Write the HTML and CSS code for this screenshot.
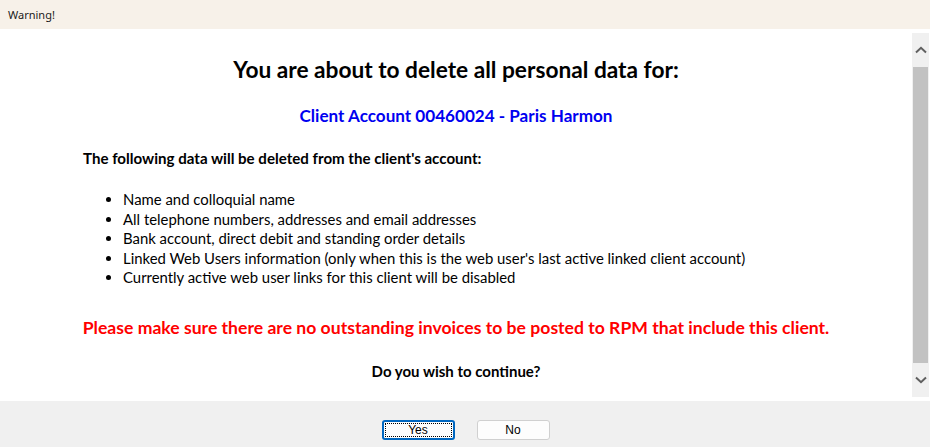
FILE: index.html
```html
<!DOCTYPE html>
<html lang="en">

<head>
  <meta charset="UTF-8">
  <meta name="viewport" content="width=device-width, initial-scale=1.0">
  <title>Warning!</title>
  <link rel="stylesheet" href="styles.css">
</head>

<body>
  <div class="titlebar">Warning!</div>
  <div class="main">
    <div class="content">
      <h1>You are about to delete all personal data for:</h1>
      <h2 class="client">Client Account 00460024 - Paris Harmon</h2>
      <p class="lead">The following data will be deleted from the client's account:</p>
      <ul>
        <li>Name and colloquial name</li>
        <li>All telephone numbers, addresses and email addresses</li>
        <li>Bank account, direct debit and standing order details</li>
        <li>Linked Web Users information (only when this is the web user's last active linked client account)</li>
        <li>Currently active web user links for this client will be disabled</li>
      </ul>
      <p class="alert">Please make sure there are no outstanding invoices to be posted to RPM that include this client.</p>
      <p class="ask">Do you wish to continue?</p>
    </div>
    <div class="scrollbar">
      <div class="arrow">
        <svg width="12" height="8" viewBox="0 0 12 8"><path d="M1 6.5 L6 1.8 L11 6.5" fill="none" stroke="#5f5f5f" stroke-width="2"/></svg>
      </div>
      <div class="thumb"></div>
      <div class="arrow">
        <svg width="12" height="8" viewBox="0 0 12 8"><path d="M1 1.5 L6 6.2 L11 1.5" fill="none" stroke="#5f5f5f" stroke-width="2"/></svg>
      </div>
    </div>
  </div>
  <div class="footer">
    <button class="btn btn_focus"><span>Yes</span></button>
    <button class="btn">No</button>
  </div>
</body>

</html>
```

FILE: styles.css
```css
* {
  box-sizing: border-box;
}

body {
  margin: 0;
  width: 930px;
  height: 447px;
  display: flex;
  flex-direction: column;
  background-color: #f0f0f0;
  font-family: Lato, "Open Sans", sans-serif;
  color: #000;
  overflow: hidden;
}

.titlebar {
  height: 29px;
  padding-left: 8px;
  display: flex;
  align-items: center;
  background-color: #f7f1e9;
  font-family: "Noto Sans", sans-serif;
  font-size: 11px;
  color: #1a1a1a;
}

.main {
  height: 372px;
  display: flex;
  background-color: #fff;
}

.content {
  flex: 1;
  padding-top: 27px;
}

h1 {
  margin: 0;
  text-align: center;
  font-size: 22.7px;
  font-weight: bold;
  line-height: 28px;
}

.client {
  margin: 21px 0 0;
  text-align: center;
  font-size: 17.1px;
  line-height: 22px;
  color: #0000f0;
}

.lead {
  margin: 21px 0 0 83px;
  font-size: 15.1px;
  font-weight: bold;
  line-height: 20px;
}

ul {
  margin: 22px 0 0;
  padding-left: 123px;
  font-size: 14.9px;
  line-height: 19.5px;
}

.alert {
  margin: 28.5px 0 0;
  text-align: center;
  font-size: 17.6px;
  font-weight: bold;
  color: #ff0000;
  line-height: 24px;
}

.ask {
  margin: 21px 0 0;
  text-align: center;
  font-size: 15px;
  font-weight: bold;
  line-height: 20px;
}

.scrollbar {
  width: 17px;
  margin: 4px 1px 4px 0;
  display: flex;
  flex-direction: column;
  background-color: #f0f0f0;
}

.arrow {
  height: 34px;
  display: flex;
  align-items: center;
  justify-content: center;
}

.thumb {
  flex: 1;
  margin: 0 1px;
  background-color: #c2c2c2;
}

.footer {
  flex: 1;
  display: flex;
  justify-content: center;
  align-items: flex-start;
  gap: 22px;
  padding-top: 19px;
  padding-left: 1px;
}

.btn {
  width: 73px;
  height: 20px;
  padding: 0;
  background-color: #fdfdfd;
  border: 1px solid #d0d0d0;
  border-radius: 3px;
  font-family: "Liberation Sans", Arial, sans-serif;
  font-size: 12px;
  color: #000;
}

.btn_focus {
  border: 2px solid #0067c0;
  padding: 1px;
}

.btn_focus span {
  display: flex;
  align-items: center;
  justify-content: center;
  height: 100%;
  border: 1px dotted #000;
}
```
